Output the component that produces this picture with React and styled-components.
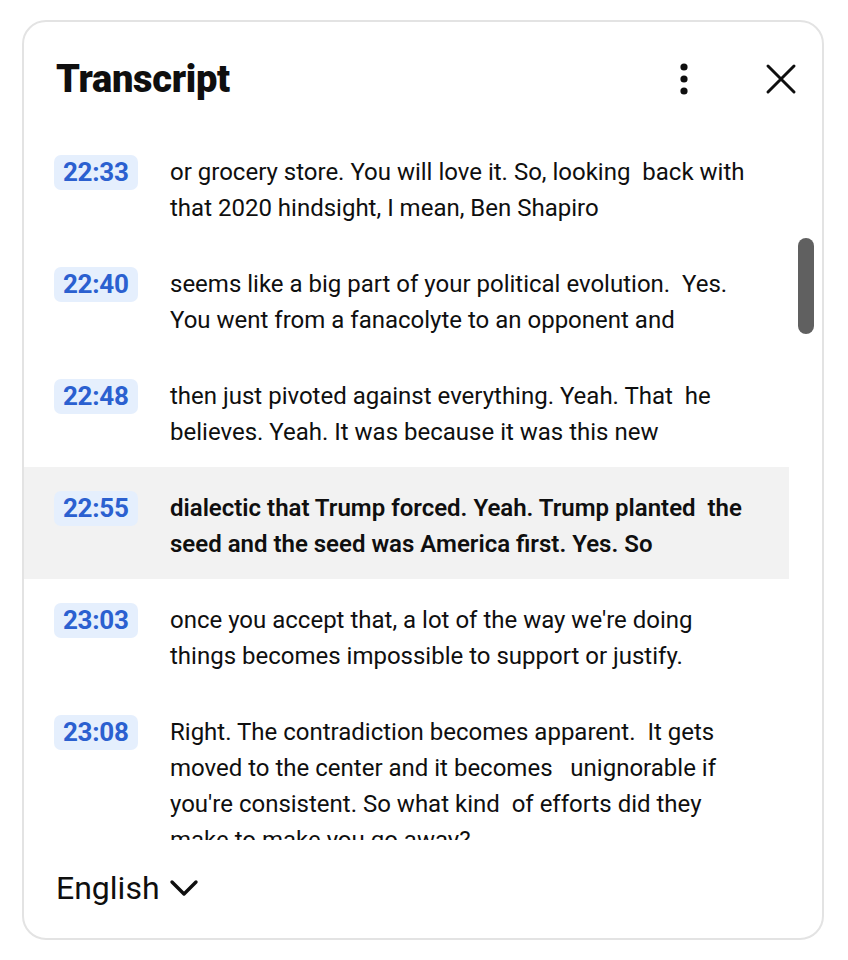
import React from 'react';
import styled, { createGlobalStyle } from 'styled-components';

const GlobalStyle = createGlobalStyle`
    html, body {
        margin: 0;
        padding: 0;
        background: #ffffff;
    }
    body {
        font-family: Roboto, "Liberation Sans", Arial, sans-serif;
        color: #0f0f0f;
    }
`;

const Page = styled.div`
    width: 848px;
    height: 960px;
    padding: 20px 24px 20px 22px;
    box-sizing: border-box;
`;

const Card = styled.div`
    height: 920px;
    border: 2px solid #e3e3e3;
    border-radius: 24px;
    box-sizing: border-box;
    display: flex;
    flex-direction: column;
    overflow: hidden;
`;

const Header = styled.div`
    height: 109px;
    flex: none;
    display: flex;
    align-items: center;
    padding: 0 21px 0 32px;
    box-sizing: border-box;
`;

const Title = styled.h1`
    margin: 4px 0 0;
    font-family: Roboto, "Liberation Sans", sans-serif;
    font-weight: 900;
    font-size: 38px;
    letter-spacing: -0.3px;
    flex: 1;
`;

const IconButton = styled.button`
    border: 0;
    background: none;
    padding: 0;
    width: 40px;
    height: 40px;
    display: flex;
    align-items: center;
    justify-content: center;
    cursor: pointer;
    margin-left: ${(p) => p.$gap || 0}px;
    margin-top: 4px;
`;

const ScrollArea = styled.div`
    flex: 1;
    min-height: 0;
    display: flex;
`;

const List = styled.div`
    flex: 1;
    overflow: hidden;
`;

const Track = styled.div`
    width: 33px;
    flex: none;
    display: flex;
    justify-content: center;
`;

const Thumb = styled.div`
    width: 16px;
    height: 96px;
    margin-top: 107px;
    border-radius: 8px;
    background: #606060;
`;

const Row = styled.div`
    display: flex;
    align-items: flex-start;
    padding: 23px 0 17px 30px;
    background: ${(p) => (p.$active ? '#f2f2f2' : 'transparent')};
`;

const StampCell = styled.div`
    width: 116px;
    flex: none;
    padding-top: 1px;
`;

const Stamp = styled.span`
    display: inline-block;
    height: 35px;
    line-height: 35px;
    padding: 0 9px;
    border-radius: 7px;
    background: #e5effd;
    color: #2b60d0;
    font-weight: 700;
    font-size: 26px;
    letter-spacing: -0.3px;
`;

const Text = styled.div`
    font-size: 24px;
    line-height: 36px;
    font-weight: ${(p) => (p.$active ? 600 : 400)};
    color: #0f0f0f;
`;

const Line = styled.span`
    display: block;
    white-space: pre;
`;

const Footer = styled.div`
    height: 96px;
    flex: none;
    display: flex;
    align-items: center;
    gap: 9px;
    padding: 0 32px 2px;
`;

const Language = styled.span`
    font-size: 32px;
    font-weight: 400;
`;

const rows = [
    { t: '22:33', lines: ['or grocery store. You will love it. So, looking  back with', 'that 2020 hindsight, I mean, Ben Shapiro'] },
    { t: '22:40', lines: ['seems like a big part of your political evolution.  Yes.', 'You went from a fanacolyte to an opponent and'] },
    { t: '22:48', lines: ['then just pivoted against everything. Yeah. That  he', 'believes. Yeah. It was because it was this new'] },
    { t: '22:55', active: true, lines: ['dialectic that Trump forced. Yeah. Trump planted  the', 'seed and the seed was America first. Yes. So'] },
    { t: '23:03', lines: ["once you accept that, a lot of the way we're doing", 'things becomes impossible to support or justify.'] },
    { t: '23:08', lines: ['Right. The contradiction becomes apparent.  It gets', 'moved to the center and it becomes   unignorable if', "you're consistent. So what kind  of efforts did they", 'make to make you go away?'] },
];

const Kebab = () => (
    <svg width="10" height="34" viewBox="0 0 10 34">
        <circle cx="5" cy="5" r="3.6" fill="#0f0f0f" />
        <circle cx="5" cy="17" r="3.6" fill="#0f0f0f" />
        <circle cx="5" cy="29" r="3.6" fill="#0f0f0f" />
    </svg>
);

const Close = () => (
    <svg width="32" height="32" viewBox="0 0 32 32">
        <path d="M3 3 L29 29 M29 3 L3 29" stroke="#0f0f0f" strokeWidth="3" strokeLinecap="round" />
    </svg>
);

const Chevron = () => (
    <svg width="30" height="18" viewBox="0 0 30 18">
        <path d="M3 3 L15 15 L27 3" stroke="#0f0f0f" strokeWidth="3.4" fill="none" strokeLinecap="round" strokeLinejoin="round" />
    </svg>
);

export default function App() {
    return (
        <Page>
            <GlobalStyle />
            <Card>
                <Header>
                    <Title>Transcript</Title>
                    <IconButton aria-label="More actions"><Kebab /></IconButton>
                    <IconButton aria-label="Close" $gap={57}><Close /></IconButton>
                </Header>
                <ScrollArea>
                    <List>
                        {rows.map((r) => (
                            <Row key={r.t} $active={r.active}>
                                <StampCell><Stamp>{r.t}</Stamp></StampCell>
                                <Text $active={r.active}>
                                    {r.lines.map((l, i) => <Line key={i}>{l}</Line>)}
                                </Text>
                            </Row>
                        ))}
                    </List>
                    <Track><Thumb /></Track>
                </ScrollArea>
                <Footer>
                    <Language>English</Language>
                    <Chevron />
                </Footer>
            </Card>
        </Page>
    );
}
